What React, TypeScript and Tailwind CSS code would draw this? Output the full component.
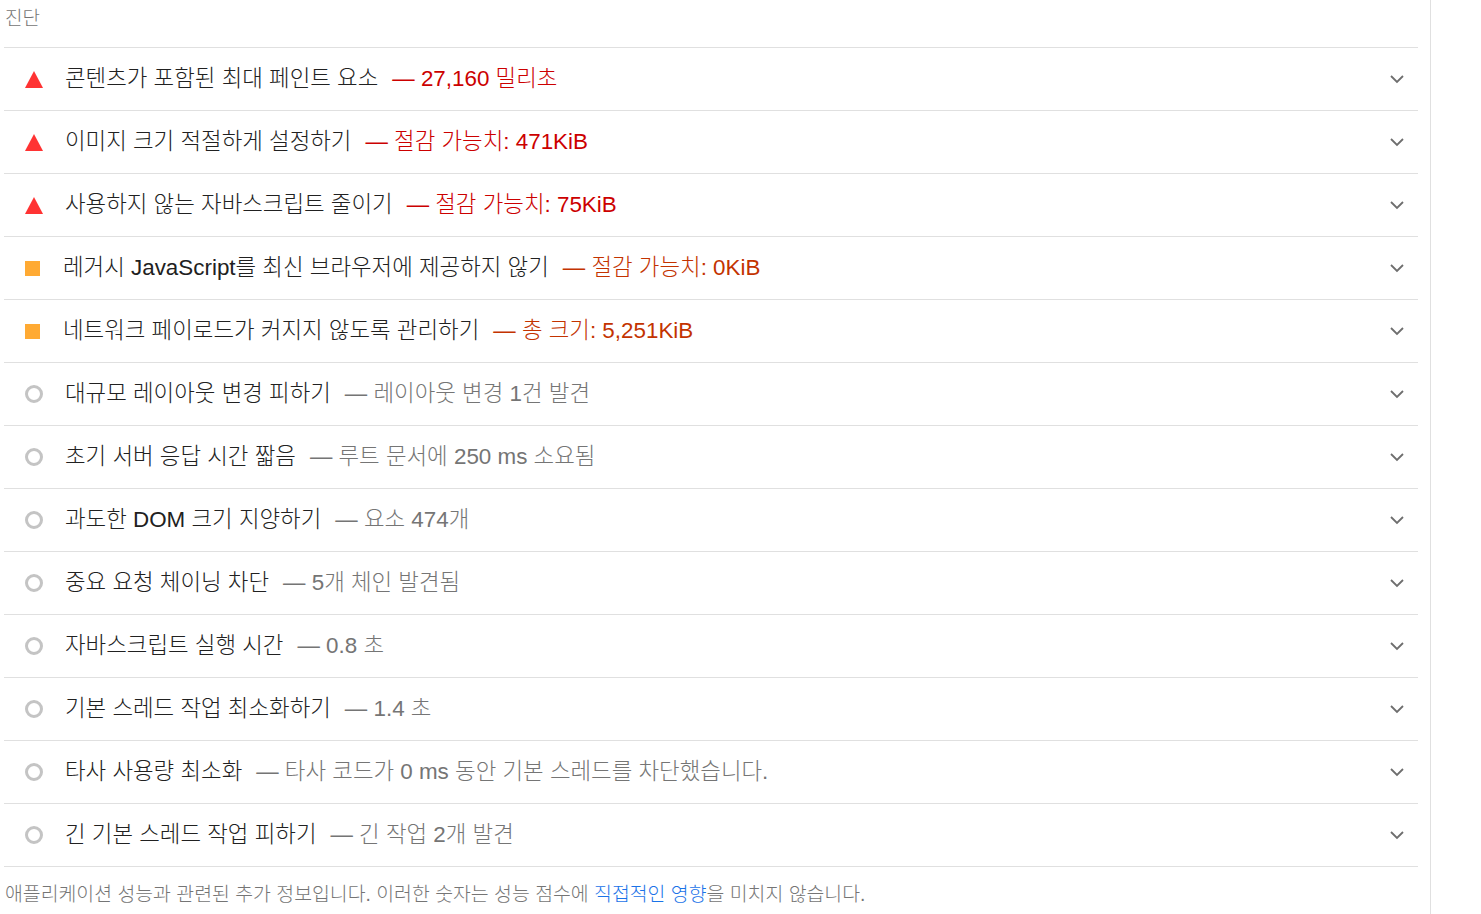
import React from "react";

type Kind = "fail" | "warn" | "info";

const rows: { kind: Kind; title: string; value: string }[] = [
  { kind: "fail", title: "콘텐츠가 포함된 최대 페인트 요소", value: "— 27,160 밀리초" },
  { kind: "fail", title: "이미지 크기 적절하게 설정하기", value: "— 절감 가능치: 471KiB" },
  { kind: "fail", title: "사용하지 않는 자바스크립트 줄이기", value: "— 절감 가능치: 75KiB" },
  { kind: "warn", title: "레거시 JavaScript를 최신 브라우저에 제공하지 않기", value: "— 절감 가능치: 0KiB" },
  { kind: "warn", title: "네트워크 페이로드가 커지지 않도록 관리하기", value: "— 총 크기: 5,251KiB" },
  { kind: "info", title: "대규모 레이아웃 변경 피하기", value: "— 레이아웃 변경 1건 발견" },
  { kind: "info", title: "초기 서버 응답 시간 짧음", value: "— 루트 문서에 250 ms 소요됨" },
  { kind: "info", title: "과도한 DOM 크기 지양하기", value: "— 요소 474개" },
  { kind: "info", title: "중요 요청 체이닝 차단", value: "— 5개 체인 발견됨" },
  { kind: "info", title: "자바스크립트 실행 시간", value: "— 0.8 초" },
  { kind: "info", title: "기본 스레드 작업 최소화하기", value: "— 1.4 초" },
  { kind: "info", title: "타사 사용량 최소화", value: "— 타사 코드가 0 ms 동안 기본 스레드를 차단했습니다." },
  { kind: "info", title: "긴 기본 스레드 작업 피하기", value: "— 긴 작업 2개 발견" },
];

function Icon({ kind }: { kind: Kind }) {
  if (kind === "fail") {
    return (
      <div className="w-[18px] h-[18px] mr-[22px] flex items-end">
        <svg width="18" height="17" viewBox="0 0 18 17">
          <polygon points="9,0 18,17 0,17" fill="#ff3333" />
        </svg>
      </div>
    );
  }
  if (kind === "warn") {
    return <div className="w-[15px] h-[15px] mr-[23px] bg-[#ffaa33]" />;
  }
  return (
    <div className="w-[18px] h-[18px] mr-[22px] rounded-full border-[3px] border-[#c4c4c4]" />
  );
}

const valueColor: Record<Kind, string> = {
  fail: "text-[#cc0000]",
  warn: "text-[#c33300]",
  info: "text-[#757575]",
};

export default function App() {
  return (
    <div
      className="w-[1481px] h-[914px] bg-white overflow-hidden flex"
      style={{ fontFamily: '"Liberation Sans", "Noto Sans CJK KR", sans-serif' }}
    >
      <div className="w-[1431px] border-r border-[#e0e0e0] pl-[4px] pr-[12px] flex flex-col">
        <div className="h-[48px] shrink-0 border-b border-[#e0e0e0] flex items-start pt-[5px] pl-[1px] text-[19px] font-light text-[#757575]">
          진단
        </div>
        {rows.map((r, i) => (
          <div
            key={i}
            className="h-[63px] shrink-0 border-b border-[#e0e0e0] flex items-center pl-[21px] pr-[14px]"
          >
            <Icon kind={r.kind} />
            <div className="flex-1 flex items-center text-[22.4px] font-light text-[#212121] whitespace-nowrap">
              <span>{r.title}</span>
              <span className={`ml-[14px] ${valueColor[r.kind]}`}>{r.value}</span>
            </div>
            <svg width="14" height="9" viewBox="0 0 14 9" className="shrink-0">
              <polyline points="1,1 7,7 13,1" fill="none" stroke="#6e6e6e" strokeWidth="1.8" />
            </svg>
          </div>
        ))}
        <div className="pt-[13px] pl-[1px] text-[19.4px] font-light text-[#757575] whitespace-nowrap">
          애플리케이션 성능과 관련된 추가 정보입니다. 이러한 숫자는 성능 점수에{" "}
          <span className="text-[#1a73e8]">직접적인 영향</span>을 미치지 않습니다.
        </div>
      </div>
    </div>
  );
}
